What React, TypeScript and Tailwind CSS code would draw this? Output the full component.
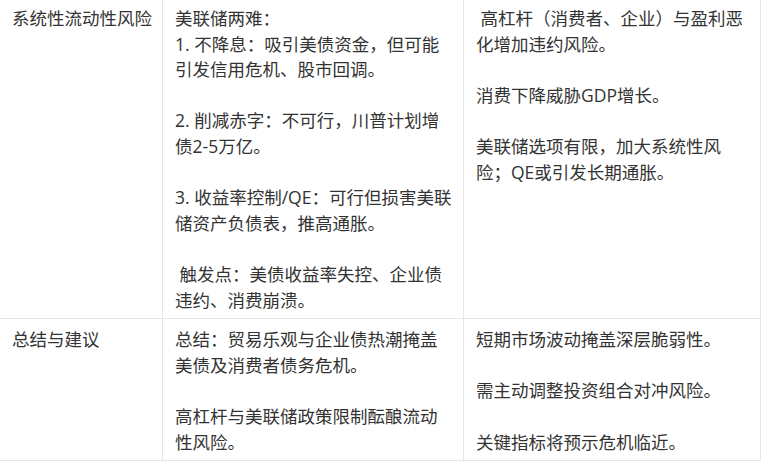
const rows: { label: string; mid: string[][]; right: string[][] }[] = [
  {
    label: "系统性流动性风险",
    mid: [
      ["美联储两难：", "1. 不降息：吸引美债资金，但可能", "引发信用危机、股市回调。"],
      ["2. 削减赤字：不可行，川普计划增", "债2-5万亿。"],
      ["3. 收益率控制/QE：可行但损害美联", "储资产负债表，推高通胀。"],
      [" 触发点：美债收益率失控、企业债", "违约、消费崩溃。"],
    ],
    right: [
      [" 高杠杆（消费者、企业）与盈利恶", "化增加违约风险。"],
      ["消费下降威胁GDP增长。"],
      ["美联储选项有限，加大系统性风", "险；QE或引发长期通胀。"],
    ],
  },
  {
    label: "总结与建议",
    mid: [
      ["总结：贸易乐观与企业债热潮掩盖", "美债及消费者债务危机。"],
      ["高杠杆与美联储政策限制酝酿流动", "性风险。"],
    ],
    right: [
      ["短期市场波动掩盖深层脆弱性。"],
      ["需主动调整投资组合对冲风险。"],
      ["关键指标将预示危机临近。"],
    ],
  },
];

function Paragraphs({ paras }: { paras: string[][] }) {
  return (
    <>
      {paras.map((lines, i) => (
        <div key={i} className={i > 0 ? "mt-[25.6px]" : ""}>
          {lines.map((l, j) => (
            <div key={j}>{l}</div>
          ))}
        </div>
      ))}
    </>
  );
}

export default function App() {
  return (
    <div className="h-[464px] w-[764px] overflow-hidden bg-white font-['Open_Sans','Noto_Sans_CJK_SC',sans-serif] text-[17.5px] leading-[25.6px] text-[#333]">
      <div className="-mt-[2px] grid w-[761px] grid-cols-[163px_301px_297px] whitespace-pre">
        {rows.map((r) => (
          <div key={r.label} className="contents">
            <div className="border-b border-r border-[#e6e6e6] pb-[5px] pl-3 pt-2">{r.label}</div>
            <div className="border-b border-r border-[#e6e6e6] pb-[5px] pl-3 pt-2">
              <Paragraphs paras={r.mid} />
            </div>
            <div className="border-b border-r border-[#e6e6e6] pb-[5px] pl-3 pt-2">
              <Paragraphs paras={r.right} />
            </div>
          </div>
        ))}
      </div>
    </div>
  );
}
